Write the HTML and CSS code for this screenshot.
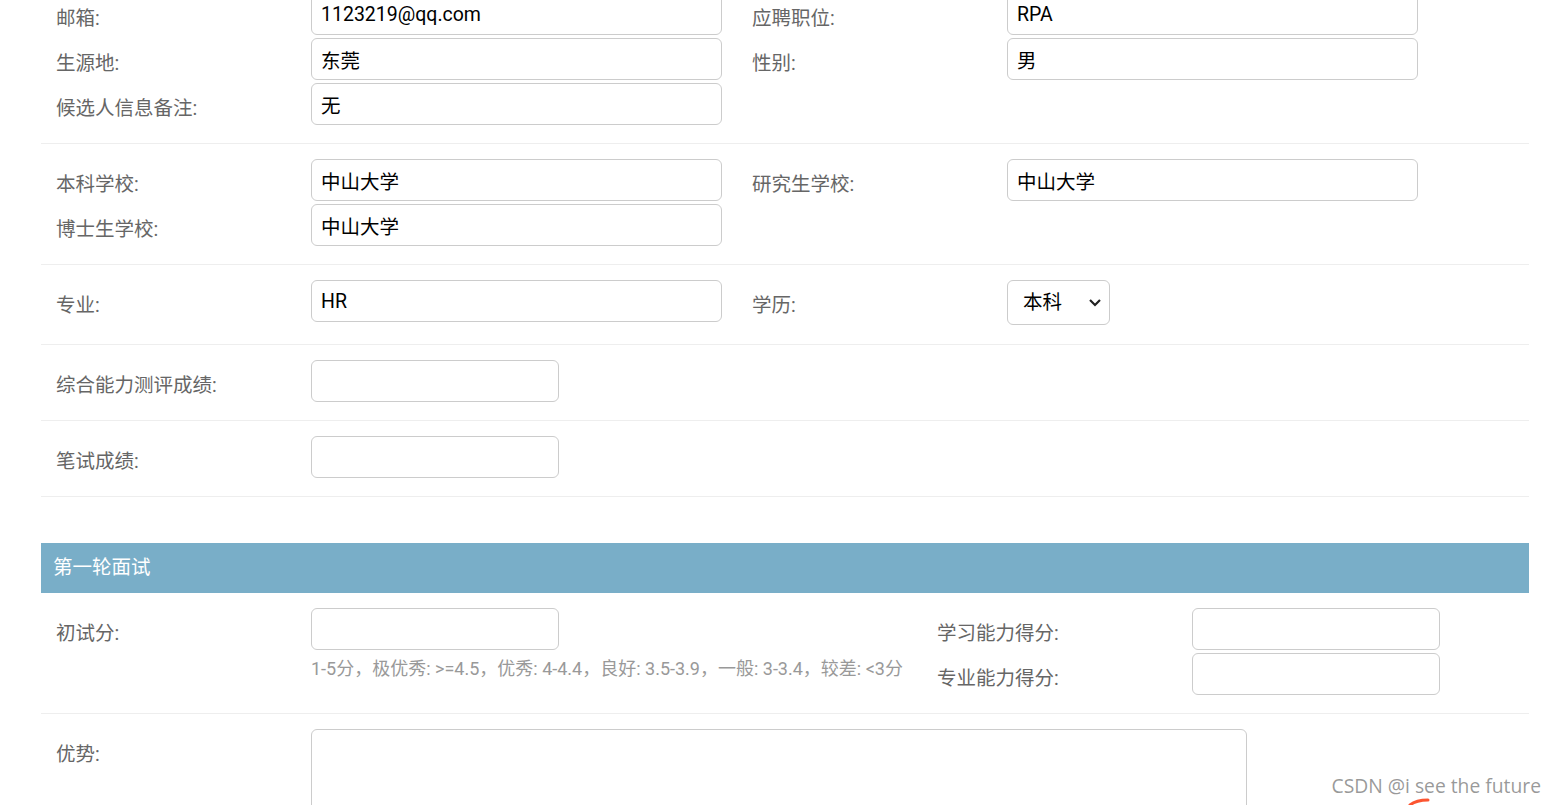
FILE: index.html
```html
<!DOCTYPE html>
<html lang="zh-CN">
<head>
    <meta charset="UTF-8">
    <title>候选人信息</title>
    <link rel="stylesheet" href="styles.css">
</head>
<body>
    <div class="page">
        <fieldset class="module">
            <div class="form-row">
                <div class="field-box">
                    <div class="field"><label>邮箱:</label><input type="text" class="v-text" value="1123219@qq.com"></div>
                    <div class="field"><label>生源地:</label><input type="text" class="v-text" value="东莞"></div>
                    <div class="field"><label>候选人信息备注:</label><input type="text" class="v-text" value="无"></div>
                </div>
                <div class="field-box">
                    <div class="field"><label>应聘职位:</label><input type="text" class="v-text" value="RPA"></div>
                    <div class="field"><label>性别:</label><input type="text" class="v-text" value="男"></div>
                </div>
            </div>
            <div class="form-row">
                <div class="field-box">
                    <div class="field"><label>本科学校:</label><input type="text" class="v-text" value="中山大学"></div>
                    <div class="field"><label>博士生学校:</label><input type="text" class="v-text" value="中山大学"></div>
                </div>
                <div class="field-box">
                    <div class="field"><label>研究生学校:</label><input type="text" class="v-text" value="中山大学"></div>
                </div>
            </div>
            <div class="form-row">
                <div class="field-box">
                    <div class="field"><label>专业:</label><input type="text" class="v-text" value="HR"></div>
                </div>
                <div class="field-box">
                    <div class="field">
                        <label>学历:</label>
                        <div class="select-wrap">
                            <select>
                                <option>本科</option>
                                <option>硕士</option>
                                <option>博士</option>
                            </select>
                            <svg class="chevron" width="14" height="9" viewBox="0 0 14 9"><path d="M2 2l5 5 5-5" fill="none" stroke="#222" stroke-width="2.2"/></svg>
                        </div>
                    </div>
                </div>
            </div>
            <div class="form-row">
                <div class="field-box">
                    <div class="field"><label>综合能力测评成绩:</label><input type="text" class="v-int"></div>
                </div>
            </div>
            <div class="form-row">
                <div class="field-box">
                    <div class="field"><label>笔试成绩:</label><input type="text" class="v-int"></div>
                </div>
            </div>
        </fieldset>

        <fieldset class="module">
            <h2>第一轮面试</h2>
            <div class="form-row">
                <div class="field-box wide">
                    <div class="field">
                        <label>初试分:</label>
                        <div class="with-help">
                            <input type="text" class="v-int">
                            <div class="help">1-5分，极优秀: &gt;=4.5，优秀: 4-4.4，良好: 3.5-3.9，一般: 3-3.4，较差: &lt;3分</div>
                        </div>
                    </div>
                </div>
                <div class="field-box">
                    <div class="field"><label>学习能力得分:</label><input type="text" class="v-int"></div>
                    <div class="field"><label>专业能力得分:</label><input type="text" class="v-int"></div>
                </div>
            </div>
            <div class="form-row">
                <div class="field-box">
                    <div class="field"><label>优势:</label><textarea></textarea></div>
                </div>
            </div>
        </fieldset>
    </div>

    <div class="watermark">CSDN @i see the future</div>
    <svg class="swish" width="24" height="8" viewBox="0 0 24 8"><path d="M2 7C7 3 13 2 20 2" fill="none" stroke="#fc5531" stroke-width="3" stroke-linecap="round"/></svg>
</body>
</html>
```

FILE: styles.css
```css
body {
    margin: 0;
    padding: 0;
    background-color: #fff;
    font-family: Roboto, "Noto Sans CJK SC", sans-serif;
    overflow: hidden;
    height: 805px;
}
.page {
    width: 1488px;
    margin: -22px 0 0 41px;
}
.module {
    border: none;
    margin: 0 0 46px 0;
    padding: 0;
    min-width: 0;
}
.module h2 {
    margin: 0;
    padding: 13px 12px;
    background-color: #79aec8;
    color: #fff;
    font-size: 19.5px;
    font-weight: normal;
    line-height: 24px;
}
.form-row {
    display: flex;
    align-items: flex-start;
    padding: 15px 15px 18px;
    border-bottom: 1px solid #eee;
}
.field-box {
    display: flex;
    flex-direction: column;
    gap: 3px;
    margin-right: 30px;
}
.field-box.wide {
    margin-right: 34px;
}
.field {
    display: flex;
    align-items: flex-start;
}
.field label {
    width: 255px;
    height: 42px;
    flex-shrink: 0;
    box-sizing: border-box;
    padding: 5px 15px 0 0;
    display: flex;
    align-items: center;
    font-size: 19.5px;
    color: #666;
}
input,
select,
textarea {
    font-family: Roboto, "Noto Sans CJK SC", sans-serif;
    font-size: 19.5px;
    color: #000;
    border: 1px solid #ccc;
    border-radius: 6px;
    background-color: #fff;
    box-sizing: border-box;
    margin: 0;
}
input {
    height: 42px;
    padding: 0 9px;
}
.v-text {
    width: 411px;
}
.v-int {
    width: 248px;
}
textarea {
    width: 936px;
    height: 160px;
    resize: none;
}
.select-wrap {
    position: relative;
    margin-bottom: 1px;
}
select {
    appearance: none;
    -webkit-appearance: none;
    display: block;
    width: 103px;
    height: 45px;
    padding: 0 0 0 15px;
}
.chevron {
    position: absolute;
    right: 8px;
    top: 18px;
    pointer-events: none;
}
.with-help {
    display: flex;
    flex-direction: column;
}
.help {
    margin-top: 9px;
    font-size: 18px;
    line-height: 20px;
    color: #999;
    white-space: nowrap;
}
.watermark {
    position: absolute;
    right: 15px;
    bottom: 6px;
    font-family: "Open Sans", sans-serif;
    font-size: 19.3px;
    color: rgba(120, 120, 120, 0.75);
}
.swish {
    position: absolute;
    left: 1408px;
    top: 798px;
}
```
